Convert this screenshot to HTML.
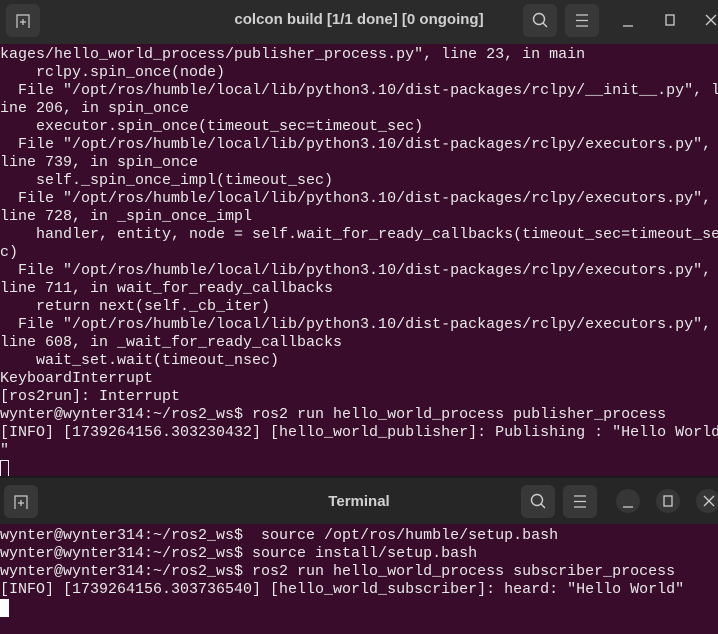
<!DOCTYPE html>
<html><head><style>
*{margin:0;padding:0;box-sizing:border-box}
body{width:718px;height:634px;overflow:hidden;background:#300a24;font-family:"Liberation Mono",monospace;position:relative}
.tb{position:absolute;left:0;width:718px;background:#2b2b2b;color:#d0d0d0;font-family:"Liberation Sans",sans-serif;font-weight:bold;font-size:15px;text-align:center}
.btn{position:absolute;width:34px;height:33px;background:#383838;border-radius:6px}
.circ{position:absolute;width:24px;height:24px;border-radius:50%}
.term{position:absolute;left:0;width:718px;background:#380c2a;color:#e8e8e8;font-size:15px;line-height:18px;white-space:pre;overflow:hidden}
.cur{display:inline-block;width:9px;height:18px;vertical-align:top}
svg{position:absolute}
</style></head><body>
<div class="tb" style="top:0;height:44px;line-height:40px">colcon build [1/1 done] [0 ongoing]
<div class="btn" style="left:6px;top:4px"></div>
<svg style="left:15px;top:13px" width="16" height="16" viewBox="0 0 16 16" fill="none" stroke="#ccc" stroke-width="1.2"><path d="M2 15V2h12v13M8 6v6M5 9h6"/></svg>
<div class="btn" style="left:523px;top:4px"></div>
<svg style="left:532px;top:12px" width="16" height="17" viewBox="0 0 16 17" fill="none" stroke="#ccc" stroke-width="1.4"><circle cx="7" cy="7" r="5.5"/><path d="M11 11l4 4"/></svg>
<div class="btn" style="left:565px;top:4px"></div>
<svg style="left:575px;top:14px" width="14" height="13" viewBox="0 0 14 13" stroke="#ccc" stroke-width="1.2"><path d="M1 1h12M1 6.5h12M1 12h12"/></svg>
<svg style="left:622px;top:14px" width="12" height="14" stroke="#ccc" stroke-width="1.3"><path d="M1 12h10"/></svg>
<svg style="left:665px;top:14px" width="12" height="12" fill="none" stroke="#ccc" stroke-width="1.3"><rect x="1" y="1" width="8" height="10"/></svg>
<svg style="left:705px;top:14px" width="12" height="12" stroke="#ccc" stroke-width="1.3"><path d="M1 1l10 10M11 1L1 11"/></svg>
</div>
<div class="term" style="top:44px;height:432px;padding-top:2px">kages/hello_world_process/publisher_process.py", line 23, in main
    rclpy.spin_once(node)
  File "/opt/ros/humble/local/lib/python3.10/dist-packages/rclpy/__init__.py", l
ine 206, in spin_once
    executor.spin_once(timeout_sec=timeout_sec)
  File "/opt/ros/humble/local/lib/python3.10/dist-packages/rclpy/executors.py", 
line 739, in spin_once
    self._spin_once_impl(timeout_sec)
  File "/opt/ros/humble/local/lib/python3.10/dist-packages/rclpy/executors.py", 
line 728, in _spin_once_impl
    handler, entity, node = self.wait_for_ready_callbacks(timeout_sec=timeout_se
c)
  File "/opt/ros/humble/local/lib/python3.10/dist-packages/rclpy/executors.py", 
line 711, in wait_for_ready_callbacks
    return next(self._cb_iter)
  File "/opt/ros/humble/local/lib/python3.10/dist-packages/rclpy/executors.py", 
line 608, in _wait_for_ready_callbacks
    wait_set.wait(timeout_nsec)
KeyboardInterrupt
[ros2run]: Interrupt
wynter@wynter314:~/ros2_ws$ ros2 run hello_world_process publisher_process
[INFO] [1739264156.303230432] [hello_world_publisher]: Publishing : "Hello World
"
<span class="cur" style="border:1px solid #eee"></span></div>
<div class="tb" style="top:476px;height:48px;line-height:48px;background:#262626;border-top:2px solid #1a1a1a">Terminal
<div class="btn" style="left:4px;top:7px"></div>
<svg style="left:13px;top:16px" width="16" height="16" viewBox="0 0 16 16" fill="none" stroke="#ccc" stroke-width="1.2"><path d="M2 15V2h12v13M8 6v6M5 9h6"/></svg>
<div class="btn" style="left:521px;top:7px"></div>
<svg style="left:530px;top:15px" width="16" height="17" viewBox="0 0 16 17" fill="none" stroke="#ccc" stroke-width="1.4"><circle cx="7" cy="7" r="5.5"/><path d="M11 11l4 4"/></svg>
<div class="btn" style="left:563px;top:7px"></div>
<svg style="left:573px;top:17px" width="14" height="13" viewBox="0 0 14 13" stroke="#ccc" stroke-width="1.2"><path d="M1 1h12M1 6.5h12M1 12h12"/></svg>
<div class="circ" style="left:616px;top:11px;background:#363636"></div>
<svg style="left:622px;top:17px" width="12" height="14" stroke="#ccc" stroke-width="1.3"><path d="M1 12h10"/></svg>
<div class="circ" style="left:656px;top:11px;background:#363636"></div>
<svg style="left:663px;top:17px" width="12" height="12" fill="none" stroke="#ccc" stroke-width="1.3"><rect x="1" y="1" width="8" height="10"/></svg>
<div class="circ" style="left:696px;top:11px;background:#363636"></div>
<svg style="left:703px;top:17px" width="12" height="12" stroke="#ccc" stroke-width="1.3"><path d="M1 1l10 10M11 1L1 11"/></svg>
</div>
<div class="term" style="top:524px;height:110px;padding-top:3px">wynter@wynter314:~/ros2_ws$  source /opt/ros/humble/setup.bash
wynter@wynter314:~/ros2_ws$ source install/setup.bash
wynter@wynter314:~/ros2_ws$ ros2 run hello_world_process subscriber_process
[INFO] [1739264156.303736540] [hello_world_subscriber]: heard: "Hello World"
<span class="cur" style="background:#fff"></span></div>
</body></html>
